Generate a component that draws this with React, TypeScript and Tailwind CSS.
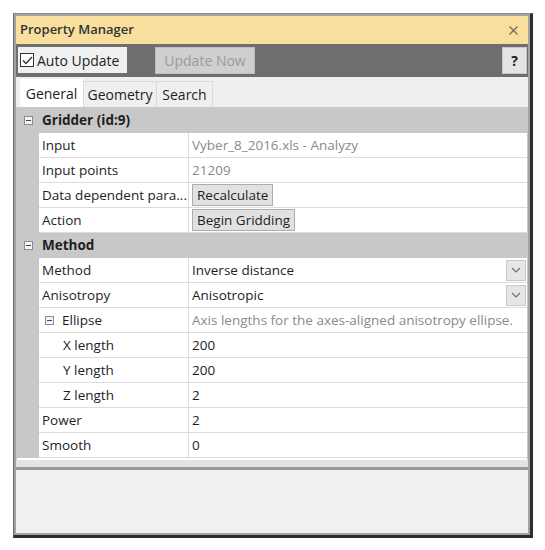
import React from "react";

// small boxed minus used to collapse a category / sub-property
const Collapse: React.FC = () => (
  <span className="w-[9px] h-[9px] border border-[#8c8c8c] bg-[#f4f4f4] flex items-center justify-center">
    <span className="w-[5px] h-px bg-[#444]" />
  </span>
);

const DropButton: React.FC = () => (
  <span className="w-[20px] h-[21px] bg-[#e6e6e6] border border-[#c9c9c9] flex items-center justify-center">
    <svg width="10" height="6" viewBox="0 0 10 6">
      <path d="M1 1 L5 5 L9 1" fill="none" stroke="#707070" strokeWidth="1.2" />
    </svg>
  </span>
);

const CellButton: React.FC<{ label: string }> = ({ label }) => (
  <span className="h-[22px] px-[4px] bg-[#e1e1e1] border border-[#adadad] flex items-center text-[#1e1e1e]">
    {label}
  </span>
);

type Row =
  | { kind: "cat"; label: string }
  | {
      kind: "prop";
      name: string;
      value?: string;
      gray?: boolean;
      indent?: boolean;
      collapse?: boolean;
      button?: string;
      drop?: boolean;
    };

const rows: Row[] = [
  { kind: "cat", label: "Gridder (id:9)" },
  { kind: "prop", name: "Input", value: "Vyber_8_2016.xls - Analyzy", gray: true },
  { kind: "prop", name: "Input points", value: "21209", gray: true },
  { kind: "prop", name: "Data dependent para...", button: "Recalculate" },
  { kind: "prop", name: "Action", button: "Begin Gridding" },
  { kind: "cat", label: "Method" },
  { kind: "prop", name: "Method", value: "Inverse distance", drop: true },
  { kind: "prop", name: "Anisotropy", value: "Anisotropic", drop: true },
  {
    kind: "prop",
    name: "Ellipse",
    collapse: true,
    value: "Axis lengths for the axes-aligned anisotropy ellipse.",
    gray: true,
  },
  { kind: "prop", name: "X length", value: "200", indent: true },
  { kind: "prop", name: "Y length", value: "200", indent: true },
  { kind: "prop", name: "Z length", value: "2", indent: true },
  { kind: "prop", name: "Power", value: "2" },
  { kind: "prop", name: "Smooth", value: "0" },
];

const GridRow: React.FC<{ row: Row }> = ({ row }) => {
  if (row.kind === "cat") {
    return (
      <div className="h-[25px] flex items-center bg-[#c8c8c8]">
        <div className="w-[22px] flex justify-center">
          <Collapse />
        </div>
        <span className="pl-[3px] font-bold text-[#1e1e1e]">{row.label}</span>
      </div>
    );
  }
  return (
    <div className="h-[25px] flex bg-[#c8c8c8]">
      <div className="w-[22px]" />
      <div className="flex-1 flex bg-white border-b border-[#dcdcdc]">
        <div className="w-[150px] shrink-0 flex items-center border-r border-[#dcdcdc] text-[#1e1e1e] whitespace-nowrap overflow-hidden">
          {row.indent ? (
            <span className="pl-[24px]">{row.name}</span>
          ) : row.collapse ? (
            <span className="flex items-center pl-[6px]">
              <Collapse />
              <span className="pl-[8px]">{row.name}</span>
            </span>
          ) : (
            <span className="pl-[3px]">{row.name}</span>
          )}
        </div>
        <div className="flex-1 flex items-center justify-between pl-[3px] pr-[1px] whitespace-nowrap overflow-hidden">
          {row.button ? (
            <CellButton label={row.button} />
          ) : (
            <span className={row.gray ? "text-[#8a8a8a]" : "text-[#1e1e1e]"}>{row.value}</span>
          )}
          {row.drop && <DropButton />}
        </div>
      </div>
    </div>
  );
};

export default function App() {
  return (
    <div className="w-[545px] h-[550px] bg-white pl-[13px] pt-[13px] font-['Open_Sans',sans-serif] text-[13.5px]">
      <div className="w-[520px] h-[525px] border-t border-l border-r-[3px] border-b-[3px] border-t-[#8a8a8a] border-l-[#6a6a6a] border-r-[#2e2e2e] border-b-[#2e2e2e] bg-[#a3a3a3] p-[2px] flex flex-col">
        {/* title bar */}
        <div className="h-[28px] bg-[#f8df9e] flex items-center justify-between pl-[4px] pr-[10px]">
          <span className="font-semibold text-[13px] text-[#333]">Property Manager</span>
          <svg width="9" height="9" viewBox="0 0 9 9">
            <path d="M0.5 0.5 L8.5 8.5 M8.5 0.5 L0.5 8.5" stroke="#707070" strokeWidth="1.4" />
          </svg>
        </div>

        {/* toolbar */}
        <div className="h-[33px] bg-[#6e6e6e] flex items-start pt-[3px] pl-[2px] pr-[1px]">
          <label className="h-[26px] w-[109px] bg-[#f0f0f0] flex items-center pl-[2px] gap-[3px] text-[14px] text-[#1e1e1e]">
            <span className="w-[14px] h-[14px] border border-[#333] bg-white flex items-center justify-center">
              <svg width="11" height="9" viewBox="0 0 11 9">
                <path d="M1 4.5 L4 7.5 L10 1" fill="none" stroke="#333" strokeWidth="1.3" />
              </svg>
            </span>
            Auto Update
          </label>
          <button className="ml-[28px] h-[27px] w-[100px] bg-[#cfcfcf] border border-[#bcbcbc] text-[#9b9b9b] text-[14px]">
            Update Now
          </button>
          <button className="ml-auto h-[27px] w-[25px] bg-[#e4e4e4] border border-[#c6c6c6] font-bold text-[#1a1a1a] text-[14px]">
            ?
          </button>
        </div>

        {/* tabs */}
        <div className="h-[30px] bg-[#efefef] flex items-end pl-[4px] text-[14px] text-[#1e1e1e]">
          <div className="h-[28px] w-[63px] bg-white flex items-center justify-center">General</div>
          <div className="h-[26px] w-[74px] border border-b-0 border-[#dadada] flex items-center justify-center">
            Geometry
          </div>
          <div className="h-[26px] w-[56px] border border-b-0 border-l-0 border-[#dadada] flex items-center justify-center">
            Search
          </div>
        </div>

        {/* property grid */}
        <div className="pt-[1px] pr-[1px] pl-[1px] bg-[#c8c8c8]">
          {rows.map((r, i) => (
            <GridRow key={i} row={r} />
          ))}
          <div className="h-[2px] bg-white" />
        </div>
        <div className="h-[7px] bg-[#e4e4e4]" />
        <div className="h-[3px] bg-[#9a9a9a]" />

        {/* description pane */}
        <div className="flex-1 bg-[#f0f0f0]" />
      </div>
    </div>
  );
}
